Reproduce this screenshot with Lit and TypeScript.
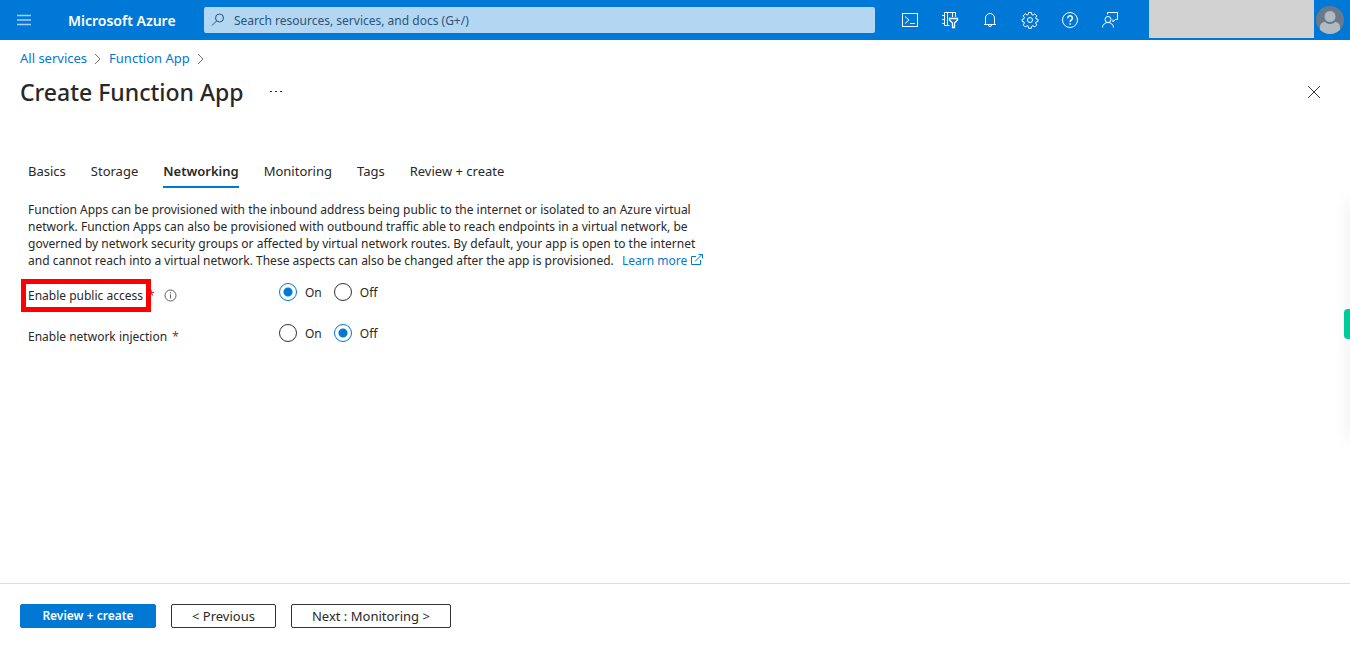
import { LitElement, html, css, svg } from "lit";
import { customElement, state } from "lit/decorators.js";

const toolIcons = [
  {
    label: "Cloud Shell",
    art: svg`<rect x="2.5" y="3.5" width="15" height="13"/><path d="M5 6.500l4 3.500-4 3.500M10 13.500h5"/>`,
  },
  {
    label: "Directories + subscriptions",
    art: svg`<path d="M9.500 15.500H4.500V2.500H15.500V7M7.500 2.500V15.500M12.500 2.500V7M2 5.500H5M2 9.500H5M2 13.500H5"/><path d="M9.500 8.500H17.500V10L14.500 13V17.500H12.500V13L9.500 10Z" stroke-width="1.300"/>`,
  },
  {
    label: "Notifications",
    art: svg`<path d="M5.500 14.500V8a4.500 4.500 0 0 1 9 0V14.500M4 14.500H16M8.500 14.500v.5a1.500 1.500 0 0 0 3 0v-.5"/>`,
  },
  {
    label: "Settings",
    art: svg`<circle cx="10" cy="10" r="2.500"/><path d="M8.600 2.500h2.800l.4 2.100 1.100.5 1.900-1.200 2 2-1.200 1.900.5 1.100 1.900.4v2.200l-1.900.4-.5 1.100 1.200 1.900-2 2-1.900-1.200-1.100.5-.4 2.100H8.600l-.4-2.100-1.100-.5-1.900 1.200-2-2 1.200-1.900-.5-1.100-1.700-.4V9.200l1.700-.4.5-1.100-1.200-1.900 2-2 1.900 1.200 1.100-.5z"/>`,
  },
  {
    label: "Help",
    art: svg`<circle cx="10" cy="10" r="7.500"/><path d="M7.800 8.200a2.300 2.300 0 1 1 3.600 1.700c-.9.600-1.300 1-1.300 2.100M10.100 13.300v1.500" stroke-width="1.500"/>`,
  },
  {
    label: "Feedback",
    art: svg`<circle cx="8" cy="9.500" r="3"/><path d="M2.500 17.500a5.500 5 0 0 1 11 0M7.500 4.500V2.500H17.500V9.500H15.500L13 12V9.500"/>`,
  },
];

const tabs = ["Basics", "Storage", "Networking", "Monitoring", "Tags", "Review + create"];

@customElement("app-root")
export class AppRoot extends LitElement {
  @state() private publicAccess = "On";
  @state() private injection = "Off";

  static styles = css`
    :host {
      display: flex;
      flex-direction: column;
      min-height: 100vh;
      position: relative;
      overflow: hidden;
      background: #fff;
      color: #292827;
      font-family: "Segoe UI", "Noto Sans", "Open Sans", sans-serif;
      font-size: 12px;
      line-height: 17px;
    }
    * {
      box-sizing: border-box;
    }
    button,
    input {
      font: inherit;
      color: inherit;
      margin: 0;
    }
    svg {
      display: block;
      fill: none;
      stroke: currentColor;
    }
    a {
      color: #0078d4;
      text-decoration: none;
    }
    .bar {
      display: flex;
      align-items: center;
      height: 40px;
      background: #0078d7;
      color: #fff;
    }
    .icon-button {
      display: grid;
      place-items: center;
      flex: none;
      width: 40px;
      height: 40px;
      padding: 0;
      border: 0;
      background: none;
    }
    .menu {
      width: 48px;
      color: #a6d0f3;
    }
    .brand {
      flex: none;
      width: 156px;
      padding-left: 20px;
      color: #fff;
      font-size: 14px;
      font-weight: 600;
      white-space: nowrap;
    }
    .search {
      flex: 1;
      display: flex;
      align-items: center;
      gap: 8px;
      height: 26px;
      margin-right: 15px;
      padding-left: 6px;
      border-radius: 2px;
      background: #b3d7f3;
      color: #24527a;
    }
    .search input {
      flex: 1;
      min-width: 0;
      padding: 0;
      border: 0;
      outline: 0;
      background: none;
    }
    .search input::placeholder {
      color: #2b5478;
      opacity: 1;
    }
    .account {
      flex: none;
      align-self: flex-start;
      width: 165px;
      height: 38px;
      margin-left: 19px;
      background: #d2d2d2;
    }
    .avatar {
      width: 36px;
      padding-right: 4px;
    }
    .crumbs {
      display: flex;
      align-items: center;
      gap: 6px;
      padding: 10px 20px 0;
      font-size: 13px;
    }
    .crumbs svg {
      color: #767574;
    }
    .heading {
      display: flex;
      align-items: center;
      height: 50px;
      padding: 0 16px 0 20px;
    }
    h1 {
      margin: 0;
      font-size: 23px;
      line-height: 32px;
      font-weight: 500;
    }
    .more {
      margin-left: 12px;
    }
    .close {
      margin-left: auto;
      color: #3b3a39;
    }
    .content {
      flex: 1;
      padding: 44px 28px 24px;
    }
    .tabs {
      display: flex;
      gap: 25px;
      font-size: 13px;
    }
    .tab {
      height: 27px;
      padding: 2px 0 6px;
      border: 0;
      border-bottom: 2px solid transparent;
      background: none;
      white-space: nowrap;
    }
    .tab.active {
      border-color: #0078d4;
      font-weight: 600;
    }
    .intro {
      max-width: 690px;
      margin: 13px 0 0;
    }
    .learn {
      margin-left: 5px;
      white-space: nowrap;
    }
    .learn svg {
      display: inline-block;
      margin-left: 4px;
      vertical-align: -1px;
    }
    .fields {
      padding-top: 13px;
    }
    .field {
      display: grid;
      grid-template-columns: 251px 1fr;
      height: 41px;
    }
    .name {
      display: flex;
      align-items: center;
      height: 26px;
    }
    .marked {
      position: relative;
    }
    .marked::after {
      content: "";
      position: absolute;
      inset: -8px -8px -8px -7px;
      border: 5px solid #f00;
    }
    .star {
      margin-left: 5px;
      color: #a4262c;
    }
    .info {
      margin-left: 9px;
      color: #605e5c;
    }
    .options {
      display: flex;
      align-items: center;
      gap: 12px;
      height: 20px;
    }
    .option {
      display: flex;
      align-items: center;
      gap: 8px;
    }
    .option input {
      appearance: none;
      width: 18px;
      height: 18px;
      border: 1px solid #323130;
      border-radius: 50%;
      background: #fff;
    }
    .option input:checked {
      border-color: #0078d4;
      background: radial-gradient(circle, #0078d4 4px, #fff 5px);
    }
    .actions {
      display: flex;
      gap: 15px;
      padding: 20px;
      border-top: 1px solid #dcdcdc;
    }
    .action {
      height: 24px;
      padding: 0 20px;
      border: 1px solid #323130;
      border-radius: 2px;
      background: #fff;
      font-size: 13px;
      line-height: 20px;
      white-space: nowrap;
    }
    .action.primary {
      min-width: 136px;
      border-color: #0078d4;
      background: #0078d4;
      color: #fff;
      font-size: 12px;
      font-weight: 600;
    }
    .shade {
      position: absolute;
      top: 200px;
      right: -20px;
      width: 20px;
      height: 240px;
      box-shadow: 0 0 20px rgba(0, 0, 0, 0.07);
    }
    .handle {
      position: absolute;
      top: 309px;
      right: 0;
      width: 6px;
      height: 30px;
      padding: 0;
      border: 0;
      border-radius: 4px 0 0 4px;
      background: #00cc99;
    }
  `;

  private chevron() {
    return html`<svg width="10" height="12" viewBox="0 0 10 12" aria-hidden="true"><path d="M2 1l5 5-5 5"/></svg>`;
  }

  private choice(name: string, value: string, pick: (v: string) => void) {
    return html`<div class="options" role="radiogroup" aria-labelledby=${name}>
      ${["On", "Off"].map(
        (o) => html`<label class="option"
          ><input type="radio" name=${name} .checked=${value === o} @change=${() => pick(o)} />${o}</label
        >`
      )}
    </div>`;
  }

  render() {
    return html`
      <header class="bar">
        <button class="icon-button menu" aria-label="Menu">
          <svg width="14" height="12" viewBox="0 0 14 12" stroke-width="1.300"><path d="M0 1.500H14M0 6H14M0 10.500H14"/></svg>
        </button>
        <a class="brand" href="#">Microsoft Azure</a>
        <label class="search">
          <svg width="16" height="16" viewBox="0 0 16 16" aria-hidden="true"><circle cx="9.500" cy="6" r="4"/><path d="M6.700 8.800L2 13.500"/></svg>
          <input type="text" aria-label="Search" placeholder="Search resources, services, and docs (G+/)" />
        </label>
        ${toolIcons.map(
          (t) => html`<button class="icon-button" aria-label=${t.label}>
            <svg width="20" height="20" viewBox="0 0 20 20">${t.art}</svg>
          </button>`
        )}
        <div class="account"></div>
        <button class="icon-button avatar" aria-label="Account">
          <svg width="28" height="28" viewBox="0 0 28 28" stroke="none">
            <circle cx="14" cy="14" r="14" fill="#69798c" stroke="none"/>
            <path d="M4 23.800V21C4 17.500 6.500 16 9 16c1.500 1.500 3 2 5 2s3.500-.5 5-2c2.500 0 5 1.500 5 5v2.800A14 14 0 0 1 4 23.800z" fill="#b1b9c1" stroke="none"/>
            <circle cx="14" cy="10.500" r="6" fill="#b1b9c1" stroke="#69798c"/>
          </svg>
        </button>
      </header>
      <nav class="crumbs" aria-label="Breadcrumb">
        <a href="#">All services</a>${this.chevron()}<a href="#">Function App</a>${this.chevron()}
      </nav>
      <div class="heading">
        <h1>Create Function App</h1>
        <button class="icon-button more" aria-label="More">
          <svg width="12" height="4" viewBox="0 0 12 4"><path d="M0 1.500h2M5 1.500h2M10 1.500h2"/></svg>
        </button>
        <button class="icon-button close" aria-label="Close">
          <svg width="12" height="12" viewBox="0 0 12 12"><path d="M0 0L12 12M12 0L0 12"/></svg>
        </button>
      </div>
      <main class="content">
        <div class="tabs" role="tablist">
          ${tabs.map(
            (t) => html`<button
              class="tab ${t === "Networking" ? "active" : ""}"
              role="tab"
              aria-selected=${t === "Networking"}
            >${t}</button>`
          )}
        </div>
        <p class="intro">
          Function Apps can be provisioned with the inbound address being public to the internet or isolated to an Azure
          virtual network. Function Apps can also be provisioned with outbound traffic able to reach endpoints in a
          virtual network, be governed by network security groups or affected by virtual network routes. By default,
          your app is open to the internet and cannot reach into a virtual network. These aspects can also be changed
          after the app is provisioned.
          <a class="learn" href="#">Learn more<svg width="12" height="12" viewBox="0 0 12 12" aria-hidden="true"><path d="M5 2.500H.5v8h9V6M4 7.500L11 .5M7.500 .5H11.500V4.500"/></svg></a>
        </p>
        <div class="fields">
          <div class="field">
            <div class="name">
              <span class="marked" id="access">Enable public access</span><span class="star">*</span>
              <svg class="info" width="13" height="13" viewBox="0 0 13 13" aria-hidden="true"><circle cx="6.500" cy="6.500" r="5.500"/><path d="M6.500 5.500v4M6.500 3.200v1.200"/></svg>
            </div>
            ${this.choice("access", this.publicAccess, (v) => (this.publicAccess = v))}
          </div>
          <div class="field">
            <div class="name"><span id="injection">Enable network injection</span><span class="star">*</span></div>
            ${this.choice("injection", this.injection, (v) => (this.injection = v))}
          </div>
        </div>
      </main>
      <footer class="actions">
        <button class="action primary">Review + create</button>
        <button class="action">&lt; Previous</button>
        <button class="action">Next : Monitoring &gt;</button>
      </footer>
      <div class="shade"></div>
      <button class="handle" aria-label="Open side panel"></button>
    `;
  }
}
